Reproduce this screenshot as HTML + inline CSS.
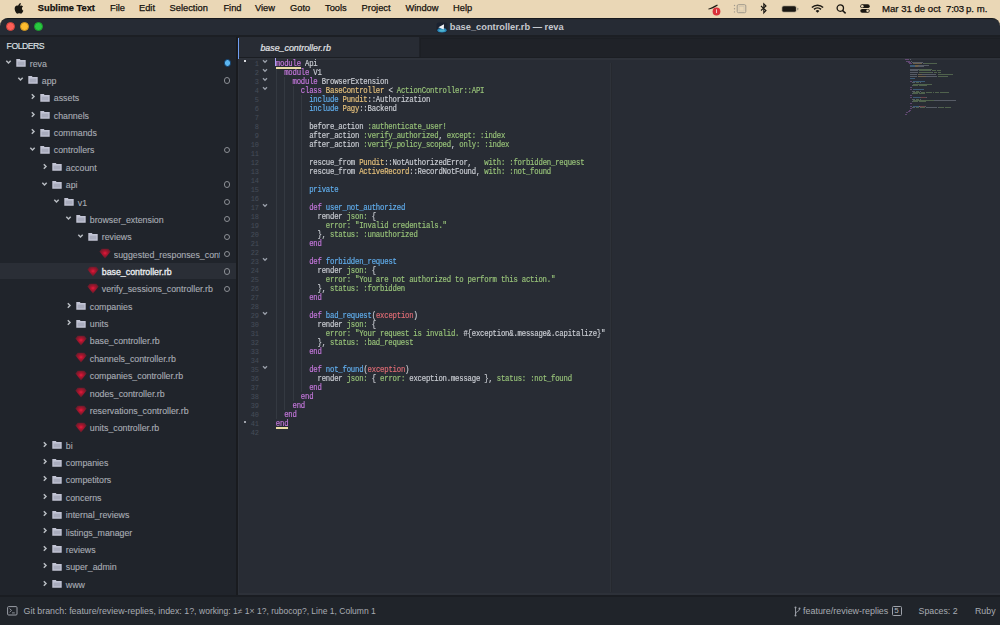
<!DOCTYPE html>
<html><head><meta charset="utf-8"><style>
*{margin:0;padding:0;box-sizing:border-box}
html,body{width:1000px;height:625px;overflow:hidden;background:#ead7b6}
body{position:relative;font-family:"Liberation Sans",sans-serif}
.abs{position:absolute}
.ic{position:absolute;overflow:visible}
.mb{position:absolute;top:2.6px;font-size:9.3px;line-height:11px;color:#15120e;white-space:nowrap;-webkit-text-stroke:0.25px #15120e}
.st{position:absolute;font-size:8.8px;line-height:12px;white-space:nowrap;color:#a8acb4;-webkit-text-stroke:0.12px currentColor}
.ln{position:absolute;left:238px;width:21px;text-align:right;font-family:"Liberation Mono",monospace;font-size:6.95px;line-height:10px;color:#464c59}
.cl{position:absolute;left:275.8px;font-family:"Liberation Mono",monospace;font-size:7.3px;letter-spacing:-0.21px;line-height:10px;white-space:pre;color:#cbced4;-webkit-text-stroke:0.15px currentColor;transform:scaleY(1.13);transform-origin:0 6.95px}
.kw{color:#c678dd} .typ{color:#e5c07b} .green{color:#98c379} .blue{color:#61afef} .txt{color:#cbced4} .red{color:#e06c75}
.ig{position:absolute;width:1px;height:9px;background:#343941}
.mm{position:absolute;height:1px;opacity:0.36}
.sb{position:absolute;top:605px;font-size:8.8px;line-height:12px;color:#a8acb3;white-space:nowrap}
</style></head><body>
<!-- menubar -->
<div class="abs" style="left:0;top:0;width:1000px;height:18px;background:#ead7b6"></div>
<svg class="ic" style="left:14px;top:2.5px" width="10" height="11" viewBox="0 0 170 200"><path fill="#1a1712" d="M150 170c-8 12-17 24-30 24s-17-8-32-8-20 8-32 8-22-12-30-24C10 145-3 100 14 70c8-15 24-25 40-25 13 0 25 9 33 9s21-10 36-9c6 0 24 2 35 19-1 1-21 12-20 37 0 29 26 39 26 39s-6 16-14 30zM118 0c2 15-4 29-12 39s-21 17-33 16c-2-15 5-30 13-39 8-9 22-16 32-16z"/></svg>
<div class="mb" style="left:37.8px;font-weight:bold">Sublime Text</div>
<div class="mb" style="left:110px">File</div>
<div class="mb" style="left:139px">Edit</div>
<div class="mb" style="left:169.6px">Selection</div>
<div class="mb" style="left:223.4px">Find</div>
<div class="mb" style="left:255px">View</div>
<div class="mb" style="left:290px">Goto</div>
<div class="mb" style="left:325px">Tools</div>
<div class="mb" style="left:361.6px">Project</div>
<div class="mb" style="left:405.4px">Window</div>
<div class="mb" style="left:453px">Help</div>
<!-- status icons -->
<svg class="ic" style="left:706px;top:2px" width="16" height="14" viewBox="0 0 16 14"><path d="M2.2 6.8 C5 5.8 7.5 4 11.2 2.4 L11.8 3.4 C8.5 5.5 5.5 7 2.6 7.4 Z" fill="#1d1a14"/><circle cx="10.5" cy="9.5" r="3.9" fill="#d9303a"/><rect x="10.1" y="7.3" width="0.9" height="3.8" fill="#f4d8d8"/></svg><svg class="ic" style="left:733px;top:3.5px" width="14" height="10" viewBox="0 0 14 10"><rect x="4.2" y="0.7" width="8.6" height="8" rx="1.2" fill="none" stroke="#9e988c" stroke-width="1"/><rect x="6" y="2.4" width="5" height="4.6" fill="none" stroke="#c9c0ae" stroke-width="0.6"/><circle cx="1.5" cy="1.5" r="0.7" fill="#9e988c"/><circle cx="1.5" cy="4.7" r="0.7" fill="#9e988c"/><circle cx="1.5" cy="7.9" r="0.7" fill="#9e988c"/></svg>
<svg class="ic" style="left:760px;top:2.5px" width="8" height="11" viewBox="0 0 8 11"><path d="M1 3 L6 7.5 L3.8 9.8 L3.8 0.8 L6 3 L1 7.5" stroke="#1a1712" stroke-width="1.1" fill="none"/></svg>
<svg class="ic" style="left:780.5px;top:4.5px" width="18" height="8" viewBox="0 0 18 8"><rect x="0.5" y="0.5" width="15.2" height="7" rx="2.2" fill="#b8ac94"/><rect x="1.3" y="1.3" width="13.6" height="5.4" rx="1.5" fill="#1a1712"/><rect x="16.2" y="2.7" width="1.1" height="2.6" rx="0.5" fill="#9a917f"/></svg>
<svg class="ic" style="left:811px;top:3.5px" width="13" height="9" viewBox="0 0 13 9"><path d="M0.9 3.5 A8 8 0 0 1 12.1 3.5" stroke="#1a1712" stroke-width="1.6" fill="none"/><path d="M3 5.4 A5 5 0 0 1 10 5.4" stroke="#1a1712" stroke-width="1.6" fill="none"/><path d="M4.6 7 L6.5 8.8 L8.4 7 A2.7 2.7 0 0 0 4.6 7Z" fill="#1a1712"/></svg>
<svg class="ic" style="left:836px;top:3.5px" width="11" height="10" viewBox="0 0 11 10"><circle cx="4.3" cy="4.1" r="3.2" stroke="#1a1712" stroke-width="1.3" fill="none"/><path d="M6.6 6.5 L9.6 9.4" stroke="#1a1712" stroke-width="1.5"/></svg>
<svg class="ic" style="left:859.5px;top:3.5px" width="10" height="9" viewBox="0 0 10 9"><rect x="0.3" y="0.3" width="9.4" height="3.8" rx="1.9" fill="#1a1712"/><circle cx="2.3" cy="2.2" r="1.3" fill="#ead7b6"/><rect x="0.3" y="4.9" width="9.4" height="3.8" rx="1.9" fill="#1a1712"/><circle cx="7.6" cy="6.8" r="1.3" fill="#ead7b6"/></svg>
<div class="mb" style="left:882px;font-size:9.6px">Mar 31 de oct</div>
<div class="mb" style="left:946px;font-size:9.6px;letter-spacing:-0.2px">7:03</div>
<div class="mb" style="left:966px;font-size:9.6px">p. m.</div>

<!-- window -->
<div class="abs" style="left:0;top:17.6px;width:1000px;height:608px;background:#262b34;border-radius:8px 8px 0 0;border-top:1.2px solid #17191d"></div>
<div class="abs" style="left:5.9px;top:22.3px;width:9px;height:9px;border-radius:50%;background:#fe5f57;border:0.5px solid #c8443d"></div>
<div class="abs" style="left:19.5px;top:22.3px;width:9px;height:9px;border-radius:50%;background:#febc2e;border:0.5px solid #c99322"></div>
<div class="abs" style="left:33.5px;top:22.3px;width:9px;height:9px;border-radius:50%;background:#28c840;border:0.5px solid #1d9a2e"></div>
<svg class="ic" style="left:435.5px;top:21.5px" width="12" height="11" viewBox="0 0 12 11"><rect x="0.5" y="0.5" width="11" height="10" rx="2.5" fill="#1b2230"/><ellipse cx="6" cy="8.3" rx="4.6" ry="2.2" fill="#2a86b8"/><ellipse cx="6" cy="8.6" rx="3" ry="1.2" fill="#5cc8d8" opacity="0.7"/><path d="M2.4 5.2 L8 2.2 L7.8 7.5 Z" fill="#f2f4f8"/></svg>
<div class="abs" style="left:449.8px;top:21.5px;font-size:9.28px;line-height:11px;font-weight:bold;color:#c5c8ce;white-space:nowrap">base_controller.rb — reva</div>

<!-- tab bar -->
<div class="abs" style="left:0;top:36.5px;width:1000px;height:21.5px;background:#1f2228"></div>
<div class="abs" style="left:0;top:35.3px;width:1000px;height:2px;background:#1c1f24"></div>
<div class="abs" style="left:238px;top:37px;width:181px;height:21px;background:#282c34"></div>
<div class="abs" style="left:420px;top:37.5px;width:580px;height:20.3px;background:#1f2228;border-left:1px solid #1c1f24;border-top:1px solid #1c1f24"></div>

<div class="abs" style="left:260.4px;top:42.5px;font-size:8.86px;line-height:11px;font-style:italic;color:#e2e4e8;white-space:nowrap;-webkit-text-stroke:0.2px #e2e4e8">base_controller.rb</div>

<!-- sidebar -->
<div class="abs" style="left:0;top:37px;width:236px;height:559px;background:#20242b"></div>
<div class="abs" style="left:236px;top:37px;width:2px;height:559px;background:#191b1f"></div>
<div class="abs" style="left:6.6px;top:42.3px;font-size:8.7px;line-height:9px;color:#dfe1e5;letter-spacing:-0.5px;-webkit-text-stroke:0.15px #dfe1e5">FOLDERS</div>
<svg class="ic" style="left:5.1px;top:59.0px" width="7" height="6" viewBox="0 0 7 6"><path d="M1.3 1.8 L3.5 4 L5.7 1.8" fill="none" stroke="#b8bcc2" stroke-width="1.5"/></svg>
<svg class="ic" style="left:15.7px;top:58.0px" width="10" height="9" viewBox="0 0 10 9"><path d="M0.3 1 L3.8 1 L4.6 2 L9.7 2 L9.7 8.7 L0.3 8.7 Z" fill="#c2c4d4"/><rect x="1.6" y="3.6" width="6.8" height="3.8" fill="#a9acbd"/></svg>
<div class="st" style="left:29.8px;top:57.5px;color:#a8acb4">reva</div>
<div style="position:absolute;left:223.6px;top:59.4px;width:7.2px;height:7.2px;border-radius:50%;background:#5cb6f0;border:1px solid #0d3a66"></div>
<svg class="ic" style="left:17.1px;top:76.4px" width="7" height="6" viewBox="0 0 7 6"><path d="M1.3 1.8 L3.5 4 L5.7 1.8" fill="none" stroke="#b8bcc2" stroke-width="1.5"/></svg>
<svg class="ic" style="left:27.7px;top:75.4px" width="10" height="9" viewBox="0 0 10 9"><path d="M0.3 1 L3.8 1 L4.6 2 L9.7 2 L9.7 8.7 L0.3 8.7 Z" fill="#c2c4d4"/><rect x="1.6" y="3.6" width="6.8" height="3.8" fill="#a9acbd"/></svg>
<div class="st" style="left:41.8px;top:74.9px;color:#a8acb4">app</div>
<div style="position:absolute;left:224.1px;top:77.2px;width:6.4px;height:6.4px;border-radius:50%;border:1.2px solid #8c8f95"></div>
<svg class="ic" style="left:29.5px;top:93.1px" width="6" height="7" viewBox="0 0 6 7"><path d="M1.8 1.3 L4 3.5 L1.8 5.7" fill="none" stroke="#b8bcc2" stroke-width="1.5"/></svg>
<svg class="ic" style="left:39.7px;top:92.7px" width="10" height="9" viewBox="0 0 10 9"><path d="M0.3 1 L3.8 1 L4.6 2 L9.7 2 L9.7 8.7 L0.3 8.7 Z" fill="#c2c4d4"/><rect x="1.6" y="3.6" width="6.8" height="3.8" fill="#a9acbd"/></svg>
<div class="st" style="left:53.8px;top:92.2px;color:#a8acb4">assets</div>
<svg class="ic" style="left:29.5px;top:110.5px" width="6" height="7" viewBox="0 0 6 7"><path d="M1.8 1.3 L4 3.5 L1.8 5.7" fill="none" stroke="#b8bcc2" stroke-width="1.5"/></svg>
<svg class="ic" style="left:39.7px;top:110.1px" width="10" height="9" viewBox="0 0 10 9"><path d="M0.3 1 L3.8 1 L4.6 2 L9.7 2 L9.7 8.7 L0.3 8.7 Z" fill="#c2c4d4"/><rect x="1.6" y="3.6" width="6.8" height="3.8" fill="#a9acbd"/></svg>
<div class="st" style="left:53.8px;top:109.6px;color:#a8acb4">channels</div>
<svg class="ic" style="left:29.5px;top:127.9px" width="6" height="7" viewBox="0 0 6 7"><path d="M1.8 1.3 L4 3.5 L1.8 5.7" fill="none" stroke="#b8bcc2" stroke-width="1.5"/></svg>
<svg class="ic" style="left:39.7px;top:127.5px" width="10" height="9" viewBox="0 0 10 9"><path d="M0.3 1 L3.8 1 L4.6 2 L9.7 2 L9.7 8.7 L0.3 8.7 Z" fill="#c2c4d4"/><rect x="1.6" y="3.6" width="6.8" height="3.8" fill="#a9acbd"/></svg>
<div class="st" style="left:53.8px;top:127.0px;color:#a8acb4">commands</div>
<svg class="ic" style="left:29.1px;top:145.9px" width="7" height="6" viewBox="0 0 7 6"><path d="M1.3 1.8 L3.5 4 L5.7 1.8" fill="none" stroke="#b8bcc2" stroke-width="1.5"/></svg>
<svg class="ic" style="left:39.7px;top:144.9px" width="10" height="9" viewBox="0 0 10 9"><path d="M0.3 1 L3.8 1 L4.6 2 L9.7 2 L9.7 8.7 L0.3 8.7 Z" fill="#c2c4d4"/><rect x="1.6" y="3.6" width="6.8" height="3.8" fill="#a9acbd"/></svg>
<div class="st" style="left:53.8px;top:144.4px;color:#a8acb4">controllers</div>
<div style="position:absolute;left:224.1px;top:146.7px;width:6.4px;height:6.4px;border-radius:50%;border:1.2px solid #8c8f95"></div>
<svg class="ic" style="left:41.5px;top:162.6px" width="6" height="7" viewBox="0 0 6 7"><path d="M1.8 1.3 L4 3.5 L1.8 5.7" fill="none" stroke="#b8bcc2" stroke-width="1.5"/></svg>
<svg class="ic" style="left:51.7px;top:162.2px" width="10" height="9" viewBox="0 0 10 9"><path d="M0.3 1 L3.8 1 L4.6 2 L9.7 2 L9.7 8.7 L0.3 8.7 Z" fill="#c2c4d4"/><rect x="1.6" y="3.6" width="6.8" height="3.8" fill="#a9acbd"/></svg>
<div class="st" style="left:65.8px;top:161.7px;color:#a8acb4">account</div>
<svg class="ic" style="left:41.1px;top:180.6px" width="7" height="6" viewBox="0 0 7 6"><path d="M1.3 1.8 L3.5 4 L5.7 1.8" fill="none" stroke="#b8bcc2" stroke-width="1.5"/></svg>
<svg class="ic" style="left:51.7px;top:179.6px" width="10" height="9" viewBox="0 0 10 9"><path d="M0.3 1 L3.8 1 L4.6 2 L9.7 2 L9.7 8.7 L0.3 8.7 Z" fill="#c2c4d4"/><rect x="1.6" y="3.6" width="6.8" height="3.8" fill="#a9acbd"/></svg>
<div class="st" style="left:65.8px;top:179.1px;color:#a8acb4">api</div>
<div style="position:absolute;left:224.1px;top:181.4px;width:6.4px;height:6.4px;border-radius:50%;border:1.2px solid #8c8f95"></div>
<svg class="ic" style="left:53.1px;top:198.0px" width="7" height="6" viewBox="0 0 7 6"><path d="M1.3 1.8 L3.5 4 L5.7 1.8" fill="none" stroke="#b8bcc2" stroke-width="1.5"/></svg>
<svg class="ic" style="left:63.7px;top:197.0px" width="10" height="9" viewBox="0 0 10 9"><path d="M0.3 1 L3.8 1 L4.6 2 L9.7 2 L9.7 8.7 L0.3 8.7 Z" fill="#c2c4d4"/><rect x="1.6" y="3.6" width="6.8" height="3.8" fill="#a9acbd"/></svg>
<div class="st" style="left:77.8px;top:196.5px;color:#a8acb4">v1</div>
<div style="position:absolute;left:224.1px;top:198.8px;width:6.4px;height:6.4px;border-radius:50%;border:1.2px solid #8c8f95"></div>
<svg class="ic" style="left:65.1px;top:215.3px" width="7" height="6" viewBox="0 0 7 6"><path d="M1.3 1.8 L3.5 4 L5.7 1.8" fill="none" stroke="#b8bcc2" stroke-width="1.5"/></svg>
<svg class="ic" style="left:75.7px;top:214.3px" width="10" height="9" viewBox="0 0 10 9"><path d="M0.3 1 L3.8 1 L4.6 2 L9.7 2 L9.7 8.7 L0.3 8.7 Z" fill="#c2c4d4"/><rect x="1.6" y="3.6" width="6.8" height="3.8" fill="#a9acbd"/></svg>
<div class="st" style="left:89.8px;top:213.8px;color:#a8acb4">browser_extension</div>
<div style="position:absolute;left:224.1px;top:216.1px;width:6.4px;height:6.4px;border-radius:50%;border:1.2px solid #8c8f95"></div>
<svg class="ic" style="left:77.1px;top:232.7px" width="7" height="6" viewBox="0 0 7 6"><path d="M1.3 1.8 L3.5 4 L5.7 1.8" fill="none" stroke="#b8bcc2" stroke-width="1.5"/></svg>
<svg class="ic" style="left:87.7px;top:231.7px" width="10" height="9" viewBox="0 0 10 9"><path d="M0.3 1 L3.8 1 L4.6 2 L9.7 2 L9.7 8.7 L0.3 8.7 Z" fill="#c2c4d4"/><rect x="1.6" y="3.6" width="6.8" height="3.8" fill="#a9acbd"/></svg>
<div class="st" style="left:101.8px;top:231.2px;color:#a8acb4">reviews</div>
<div style="position:absolute;left:224.1px;top:233.5px;width:6.4px;height:6.4px;border-radius:50%;border:1.2px solid #8c8f95"></div>
<svg class="ic" style="left:98.5px;top:248.2px" width="12" height="11" viewBox="0 0 12 11"><defs><radialGradient id="rg" cx="0.5" cy="0.45" r="0.55"><stop offset="0" stop-color="#e41c3e"/><stop offset="0.35" stop-color="#b0142e"/><stop offset="1" stop-color="#5a1d2a"/></radialGradient></defs><path d="M2.6 0.8 L9.4 0.8 L11.6 3.6 L6 10.4 L0.4 3.6 Z" fill="url(#rg)"/></svg>
<div class="st" style="left:113.8px;top:248.6px;color:#a8acb4;width:106px;overflow:hidden">suggested_responses_cont</div>
<div style="position:absolute;left:224.1px;top:250.9px;width:6.4px;height:6.4px;border-radius:50%;border:1.2px solid #8c8f95"></div>
<div style="position:absolute;left:0;top:263.1px;width:236px;height:16.4px;background:#2a2e36"></div>
<svg class="ic" style="left:86.5px;top:265.5px" width="12" height="11" viewBox="0 0 12 11"><defs><radialGradient id="rg" cx="0.5" cy="0.45" r="0.55"><stop offset="0" stop-color="#e41c3e"/><stop offset="0.35" stop-color="#b0142e"/><stop offset="1" stop-color="#5a1d2a"/></radialGradient></defs><path d="M2.6 0.8 L9.4 0.8 L11.6 3.6 L6 10.4 L0.4 3.6 Z" fill="url(#rg)"/></svg>
<div class="st" style="left:101.8px;top:265.9px;color:#eceef2;-webkit-text-stroke:0.3px #eceef2">base_controller.rb</div>
<div style="position:absolute;left:224.1px;top:268.2px;width:6.4px;height:6.4px;border-radius:50%;border:1.2px solid #8c8f95"></div>
<svg class="ic" style="left:86.5px;top:282.9px" width="12" height="11" viewBox="0 0 12 11"><defs><radialGradient id="rg" cx="0.5" cy="0.45" r="0.55"><stop offset="0" stop-color="#e41c3e"/><stop offset="0.35" stop-color="#b0142e"/><stop offset="1" stop-color="#5a1d2a"/></radialGradient></defs><path d="M2.6 0.8 L9.4 0.8 L11.6 3.6 L6 10.4 L0.4 3.6 Z" fill="url(#rg)"/></svg>
<div class="st" style="left:101.8px;top:283.3px;color:#a8acb4">verify_sessions_controller.rb</div>
<div style="position:absolute;left:224.1px;top:285.6px;width:6.4px;height:6.4px;border-radius:50%;border:1.2px solid #8c8f95"></div>
<svg class="ic" style="left:65.5px;top:301.6px" width="6" height="7" viewBox="0 0 6 7"><path d="M1.8 1.3 L4 3.5 L1.8 5.7" fill="none" stroke="#b8bcc2" stroke-width="1.5"/></svg>
<svg class="ic" style="left:75.7px;top:301.2px" width="10" height="9" viewBox="0 0 10 9"><path d="M0.3 1 L3.8 1 L4.6 2 L9.7 2 L9.7 8.7 L0.3 8.7 Z" fill="#c2c4d4"/><rect x="1.6" y="3.6" width="6.8" height="3.8" fill="#a9acbd"/></svg>
<div class="st" style="left:89.8px;top:300.7px;color:#a8acb4">companies</div>
<svg class="ic" style="left:65.5px;top:318.9px" width="6" height="7" viewBox="0 0 6 7"><path d="M1.8 1.3 L4 3.5 L1.8 5.7" fill="none" stroke="#b8bcc2" stroke-width="1.5"/></svg>
<svg class="ic" style="left:75.7px;top:318.6px" width="10" height="9" viewBox="0 0 10 9"><path d="M0.3 1 L3.8 1 L4.6 2 L9.7 2 L9.7 8.7 L0.3 8.7 Z" fill="#c2c4d4"/><rect x="1.6" y="3.6" width="6.8" height="3.8" fill="#a9acbd"/></svg>
<div class="st" style="left:89.8px;top:318.1px;color:#a8acb4">units</div>
<svg class="ic" style="left:74.5px;top:335.0px" width="12" height="11" viewBox="0 0 12 11"><defs><radialGradient id="rg" cx="0.5" cy="0.45" r="0.55"><stop offset="0" stop-color="#e41c3e"/><stop offset="0.35" stop-color="#b0142e"/><stop offset="1" stop-color="#5a1d2a"/></radialGradient></defs><path d="M2.6 0.8 L9.4 0.8 L11.6 3.6 L6 10.4 L0.4 3.6 Z" fill="url(#rg)"/></svg>
<div class="st" style="left:89.8px;top:335.4px;color:#a8acb4">base_controller.rb</div>
<svg class="ic" style="left:74.5px;top:352.4px" width="12" height="11" viewBox="0 0 12 11"><defs><radialGradient id="rg" cx="0.5" cy="0.45" r="0.55"><stop offset="0" stop-color="#e41c3e"/><stop offset="0.35" stop-color="#b0142e"/><stop offset="1" stop-color="#5a1d2a"/></radialGradient></defs><path d="M2.6 0.8 L9.4 0.8 L11.6 3.6 L6 10.4 L0.4 3.6 Z" fill="url(#rg)"/></svg>
<div class="st" style="left:89.8px;top:352.8px;color:#a8acb4">channels_controller.rb</div>
<svg class="ic" style="left:74.5px;top:369.8px" width="12" height="11" viewBox="0 0 12 11"><defs><radialGradient id="rg" cx="0.5" cy="0.45" r="0.55"><stop offset="0" stop-color="#e41c3e"/><stop offset="0.35" stop-color="#b0142e"/><stop offset="1" stop-color="#5a1d2a"/></radialGradient></defs><path d="M2.6 0.8 L9.4 0.8 L11.6 3.6 L6 10.4 L0.4 3.6 Z" fill="url(#rg)"/></svg>
<div class="st" style="left:89.8px;top:370.2px;color:#a8acb4">companies_controller.rb</div>
<svg class="ic" style="left:74.5px;top:387.1px" width="12" height="11" viewBox="0 0 12 11"><defs><radialGradient id="rg" cx="0.5" cy="0.45" r="0.55"><stop offset="0" stop-color="#e41c3e"/><stop offset="0.35" stop-color="#b0142e"/><stop offset="1" stop-color="#5a1d2a"/></radialGradient></defs><path d="M2.6 0.8 L9.4 0.8 L11.6 3.6 L6 10.4 L0.4 3.6 Z" fill="url(#rg)"/></svg>
<div class="st" style="left:89.8px;top:387.5px;color:#a8acb4">nodes_controller.rb</div>
<svg class="ic" style="left:74.5px;top:404.5px" width="12" height="11" viewBox="0 0 12 11"><defs><radialGradient id="rg" cx="0.5" cy="0.45" r="0.55"><stop offset="0" stop-color="#e41c3e"/><stop offset="0.35" stop-color="#b0142e"/><stop offset="1" stop-color="#5a1d2a"/></radialGradient></defs><path d="M2.6 0.8 L9.4 0.8 L11.6 3.6 L6 10.4 L0.4 3.6 Z" fill="url(#rg)"/></svg>
<div class="st" style="left:89.8px;top:404.9px;color:#a8acb4">reservations_controller.rb</div>
<svg class="ic" style="left:74.5px;top:421.9px" width="12" height="11" viewBox="0 0 12 11"><defs><radialGradient id="rg" cx="0.5" cy="0.45" r="0.55"><stop offset="0" stop-color="#e41c3e"/><stop offset="0.35" stop-color="#b0142e"/><stop offset="1" stop-color="#5a1d2a"/></radialGradient></defs><path d="M2.6 0.8 L9.4 0.8 L11.6 3.6 L6 10.4 L0.4 3.6 Z" fill="url(#rg)"/></svg>
<div class="st" style="left:89.8px;top:422.3px;color:#a8acb4">units_controller.rb</div>
<svg class="ic" style="left:41.5px;top:440.5px" width="6" height="7" viewBox="0 0 6 7"><path d="M1.8 1.3 L4 3.5 L1.8 5.7" fill="none" stroke="#b8bcc2" stroke-width="1.5"/></svg>
<svg class="ic" style="left:51.7px;top:440.1px" width="10" height="9" viewBox="0 0 10 9"><path d="M0.3 1 L3.8 1 L4.6 2 L9.7 2 L9.7 8.7 L0.3 8.7 Z" fill="#c2c4d4"/><rect x="1.6" y="3.6" width="6.8" height="3.8" fill="#a9acbd"/></svg>
<div class="st" style="left:65.8px;top:439.6px;color:#a8acb4">bi</div>
<svg class="ic" style="left:41.5px;top:457.9px" width="6" height="7" viewBox="0 0 6 7"><path d="M1.8 1.3 L4 3.5 L1.8 5.7" fill="none" stroke="#b8bcc2" stroke-width="1.5"/></svg>
<svg class="ic" style="left:51.7px;top:457.5px" width="10" height="9" viewBox="0 0 10 9"><path d="M0.3 1 L3.8 1 L4.6 2 L9.7 2 L9.7 8.7 L0.3 8.7 Z" fill="#c2c4d4"/><rect x="1.6" y="3.6" width="6.8" height="3.8" fill="#a9acbd"/></svg>
<div class="st" style="left:65.8px;top:457.0px;color:#a8acb4">companies</div>
<svg class="ic" style="left:41.5px;top:475.3px" width="6" height="7" viewBox="0 0 6 7"><path d="M1.8 1.3 L4 3.5 L1.8 5.7" fill="none" stroke="#b8bcc2" stroke-width="1.5"/></svg>
<svg class="ic" style="left:51.7px;top:474.9px" width="10" height="9" viewBox="0 0 10 9"><path d="M0.3 1 L3.8 1 L4.6 2 L9.7 2 L9.7 8.7 L0.3 8.7 Z" fill="#c2c4d4"/><rect x="1.6" y="3.6" width="6.8" height="3.8" fill="#a9acbd"/></svg>
<div class="st" style="left:65.8px;top:474.4px;color:#a8acb4">competitors</div>
<svg class="ic" style="left:41.5px;top:492.6px" width="6" height="7" viewBox="0 0 6 7"><path d="M1.8 1.3 L4 3.5 L1.8 5.7" fill="none" stroke="#b8bcc2" stroke-width="1.5"/></svg>
<svg class="ic" style="left:51.7px;top:492.2px" width="10" height="9" viewBox="0 0 10 9"><path d="M0.3 1 L3.8 1 L4.6 2 L9.7 2 L9.7 8.7 L0.3 8.7 Z" fill="#c2c4d4"/><rect x="1.6" y="3.6" width="6.8" height="3.8" fill="#a9acbd"/></svg>
<div class="st" style="left:65.8px;top:491.8px;color:#a8acb4">concerns</div>
<svg class="ic" style="left:41.5px;top:510.0px" width="6" height="7" viewBox="0 0 6 7"><path d="M1.8 1.3 L4 3.5 L1.8 5.7" fill="none" stroke="#b8bcc2" stroke-width="1.5"/></svg>
<svg class="ic" style="left:51.7px;top:509.6px" width="10" height="9" viewBox="0 0 10 9"><path d="M0.3 1 L3.8 1 L4.6 2 L9.7 2 L9.7 8.7 L0.3 8.7 Z" fill="#c2c4d4"/><rect x="1.6" y="3.6" width="6.8" height="3.8" fill="#a9acbd"/></svg>
<div class="st" style="left:65.8px;top:509.1px;color:#a8acb4">internal_reviews</div>
<svg class="ic" style="left:41.5px;top:527.4px" width="6" height="7" viewBox="0 0 6 7"><path d="M1.8 1.3 L4 3.5 L1.8 5.7" fill="none" stroke="#b8bcc2" stroke-width="1.5"/></svg>
<svg class="ic" style="left:51.7px;top:527.0px" width="10" height="9" viewBox="0 0 10 9"><path d="M0.3 1 L3.8 1 L4.6 2 L9.7 2 L9.7 8.7 L0.3 8.7 Z" fill="#c2c4d4"/><rect x="1.6" y="3.6" width="6.8" height="3.8" fill="#a9acbd"/></svg>
<div class="st" style="left:65.8px;top:526.5px;color:#a8acb4">listings_manager</div>
<svg class="ic" style="left:41.5px;top:544.8px" width="6" height="7" viewBox="0 0 6 7"><path d="M1.8 1.3 L4 3.5 L1.8 5.7" fill="none" stroke="#b8bcc2" stroke-width="1.5"/></svg>
<svg class="ic" style="left:51.7px;top:544.4px" width="10" height="9" viewBox="0 0 10 9"><path d="M0.3 1 L3.8 1 L4.6 2 L9.7 2 L9.7 8.7 L0.3 8.7 Z" fill="#c2c4d4"/><rect x="1.6" y="3.6" width="6.8" height="3.8" fill="#a9acbd"/></svg>
<div class="st" style="left:65.8px;top:543.9px;color:#a8acb4">reviews</div>
<svg class="ic" style="left:41.5px;top:562.1px" width="6" height="7" viewBox="0 0 6 7"><path d="M1.8 1.3 L4 3.5 L1.8 5.7" fill="none" stroke="#b8bcc2" stroke-width="1.5"/></svg>
<svg class="ic" style="left:51.7px;top:561.7px" width="10" height="9" viewBox="0 0 10 9"><path d="M0.3 1 L3.8 1 L4.6 2 L9.7 2 L9.7 8.7 L0.3 8.7 Z" fill="#c2c4d4"/><rect x="1.6" y="3.6" width="6.8" height="3.8" fill="#a9acbd"/></svg>
<div class="st" style="left:65.8px;top:561.2px;color:#a8acb4">super_admin</div>
<svg class="ic" style="left:41.5px;top:579.5px" width="6" height="7" viewBox="0 0 6 7"><path d="M1.8 1.3 L4 3.5 L1.8 5.7" fill="none" stroke="#b8bcc2" stroke-width="1.5"/></svg>
<svg class="ic" style="left:51.7px;top:579.1px" width="10" height="9" viewBox="0 0 10 9"><path d="M0.3 1 L3.8 1 L4.6 2 L9.7 2 L9.7 8.7 L0.3 8.7 Z" fill="#c2c4d4"/><rect x="1.6" y="3.6" width="6.8" height="3.8" fill="#a9acbd"/></svg>
<div class="st" style="left:65.8px;top:578.6px;color:#a8acb4">www</div>

<!-- editor -->
<div class="abs" style="left:238px;top:58px;width:762px;height:538px;background:#282c34"></div>
<div class="abs" style="left:238px;top:57.3px;width:762px;height:1px;background:#1b1e23"></div>
<div class="abs" style="left:238px;top:58.3px;width:762px;height:1.5px;background:#2e323a"></div>
<div class="abs" style="left:609.5px;top:63px;width:1.3px;height:529px;background:#2e3239"></div>
<div class="abs" style="left:610.8px;top:63px;width:1.5px;height:529px;background:#26292f"></div>
<div class="abs" style="left:238px;top:58px;width:1px;height:537px;background:#2d3139"></div>
<div class="abs" style="left:237.5px;top:37.5px;width:1.6px;height:21.3px;background:#6f9ef2"></div>
<div class="ig" style="left:276.4px;top:68.0px"></div><div class="ig" style="left:284.4px;top:77.0px"></div><div class="ig" style="left:276.4px;top:77.0px"></div><div class="ig" style="left:284.4px;top:86.0px"></div><div class="ig" style="left:292.8px;top:86.0px"></div><div class="ig" style="left:276.4px;top:86.0px"></div><div class="ig" style="left:284.4px;top:95.0px"></div><div class="ig" style="left:292.8px;top:95.0px"></div><div class="ig" style="left:301.1px;top:95.0px"></div><div class="ig" style="left:276.4px;top:95.0px"></div><div class="ig" style="left:284.4px;top:104.0px"></div><div class="ig" style="left:292.8px;top:104.0px"></div><div class="ig" style="left:301.1px;top:104.0px"></div><div class="ig" style="left:276.4px;top:104.0px"></div><div class="ig" style="left:284.4px;top:113.0px"></div><div class="ig" style="left:292.8px;top:113.0px"></div><div class="ig" style="left:301.1px;top:113.0px"></div><div class="ig" style="left:276.4px;top:113.0px"></div><div class="ig" style="left:284.4px;top:122.0px"></div><div class="ig" style="left:292.8px;top:122.0px"></div><div class="ig" style="left:301.1px;top:122.0px"></div><div class="ig" style="left:276.4px;top:122.0px"></div><div class="ig" style="left:284.4px;top:131.0px"></div><div class="ig" style="left:292.8px;top:131.0px"></div><div class="ig" style="left:301.1px;top:131.0px"></div><div class="ig" style="left:276.4px;top:131.0px"></div><div class="ig" style="left:284.4px;top:140.0px"></div><div class="ig" style="left:292.8px;top:140.0px"></div><div class="ig" style="left:301.1px;top:140.0px"></div><div class="ig" style="left:276.4px;top:140.0px"></div><div class="ig" style="left:284.4px;top:149.0px"></div><div class="ig" style="left:292.8px;top:149.0px"></div><div class="ig" style="left:301.1px;top:149.0px"></div><div class="ig" style="left:276.4px;top:149.0px"></div><div class="ig" style="left:284.4px;top:158.0px"></div><div class="ig" style="left:292.8px;top:158.0px"></div><div class="ig" style="left:301.1px;top:158.0px"></div><div class="ig" style="left:276.4px;top:158.0px"></div><div class="ig" style="left:284.4px;top:167.0px"></div><div class="ig" style="left:292.8px;top:167.0px"></div><div class="ig" style="left:301.1px;top:167.0px"></div><div class="ig" style="left:276.4px;top:167.0px"></div><div class="ig" style="left:284.4px;top:176.0px"></div><div class="ig" style="left:292.8px;top:176.0px"></div><div class="ig" style="left:301.1px;top:176.0px"></div><div class="ig" style="left:276.4px;top:176.0px"></div><div class="ig" style="left:284.4px;top:185.0px"></div><div class="ig" style="left:292.8px;top:185.0px"></div><div class="ig" style="left:301.1px;top:185.0px"></div><div class="ig" style="left:276.4px;top:185.0px"></div><div class="ig" style="left:284.4px;top:194.0px"></div><div class="ig" style="left:292.8px;top:194.0px"></div><div class="ig" style="left:301.1px;top:194.0px"></div><div class="ig" style="left:276.4px;top:194.0px"></div><div class="ig" style="left:284.4px;top:203.0px"></div><div class="ig" style="left:292.8px;top:203.0px"></div><div class="ig" style="left:301.1px;top:203.0px"></div><div class="ig" style="left:276.4px;top:203.0px"></div><div class="ig" style="left:284.4px;top:212.0px"></div><div class="ig" style="left:292.8px;top:212.0px"></div><div class="ig" style="left:301.1px;top:212.0px"></div><div class="ig" style="left:276.4px;top:212.0px"></div><div class="ig" style="left:284.4px;top:221.0px"></div><div class="ig" style="left:292.8px;top:221.0px"></div><div class="ig" style="left:301.1px;top:221.0px"></div><div class="ig" style="left:276.4px;top:221.0px"></div><div class="ig" style="left:284.4px;top:230.0px"></div><div class="ig" style="left:292.8px;top:230.0px"></div><div class="ig" style="left:301.1px;top:230.0px"></div><div class="ig" style="left:276.4px;top:230.0px"></div><div class="ig" style="left:284.4px;top:239.0px"></div><div class="ig" style="left:292.8px;top:239.0px"></div><div class="ig" style="left:301.1px;top:239.0px"></div><div class="ig" style="left:276.4px;top:239.0px"></div><div class="ig" style="left:284.4px;top:248.0px"></div><div class="ig" style="left:292.8px;top:248.0px"></div><div class="ig" style="left:301.1px;top:248.0px"></div><div class="ig" style="left:276.4px;top:248.0px"></div><div class="ig" style="left:284.4px;top:257.0px"></div><div class="ig" style="left:292.8px;top:257.0px"></div><div class="ig" style="left:301.1px;top:257.0px"></div><div class="ig" style="left:276.4px;top:257.0px"></div><div class="ig" style="left:284.4px;top:266.0px"></div><div class="ig" style="left:292.8px;top:266.0px"></div><div class="ig" style="left:301.1px;top:266.0px"></div><div class="ig" style="left:276.4px;top:266.0px"></div><div class="ig" style="left:284.4px;top:275.0px"></div><div class="ig" style="left:292.8px;top:275.0px"></div><div class="ig" style="left:301.1px;top:275.0px"></div><div class="ig" style="left:276.4px;top:275.0px"></div><div class="ig" style="left:284.4px;top:284.0px"></div><div class="ig" style="left:292.8px;top:284.0px"></div><div class="ig" style="left:301.1px;top:284.0px"></div><div class="ig" style="left:276.4px;top:284.0px"></div><div class="ig" style="left:284.4px;top:293.0px"></div><div class="ig" style="left:292.8px;top:293.0px"></div><div class="ig" style="left:301.1px;top:293.0px"></div><div class="ig" style="left:276.4px;top:293.0px"></div><div class="ig" style="left:284.4px;top:302.0px"></div><div class="ig" style="left:292.8px;top:302.0px"></div><div class="ig" style="left:301.1px;top:302.0px"></div><div class="ig" style="left:276.4px;top:302.0px"></div><div class="ig" style="left:284.4px;top:311.0px"></div><div class="ig" style="left:292.8px;top:311.0px"></div><div class="ig" style="left:301.1px;top:311.0px"></div><div class="ig" style="left:276.4px;top:311.0px"></div><div class="ig" style="left:284.4px;top:320.0px"></div><div class="ig" style="left:292.8px;top:320.0px"></div><div class="ig" style="left:301.1px;top:320.0px"></div><div class="ig" style="left:276.4px;top:320.0px"></div><div class="ig" style="left:284.4px;top:329.0px"></div><div class="ig" style="left:292.8px;top:329.0px"></div><div class="ig" style="left:301.1px;top:329.0px"></div><div class="ig" style="left:276.4px;top:329.0px"></div><div class="ig" style="left:284.4px;top:338.0px"></div><div class="ig" style="left:292.8px;top:338.0px"></div><div class="ig" style="left:301.1px;top:338.0px"></div><div class="ig" style="left:276.4px;top:338.0px"></div><div class="ig" style="left:284.4px;top:347.0px"></div><div class="ig" style="left:292.8px;top:347.0px"></div><div class="ig" style="left:301.1px;top:347.0px"></div><div class="ig" style="left:276.4px;top:347.0px"></div><div class="ig" style="left:284.4px;top:356.0px"></div><div class="ig" style="left:292.8px;top:356.0px"></div><div class="ig" style="left:301.1px;top:356.0px"></div><div class="ig" style="left:276.4px;top:356.0px"></div><div class="ig" style="left:284.4px;top:365.0px"></div><div class="ig" style="left:292.8px;top:365.0px"></div><div class="ig" style="left:301.1px;top:365.0px"></div><div class="ig" style="left:276.4px;top:365.0px"></div><div class="ig" style="left:284.4px;top:374.0px"></div><div class="ig" style="left:292.8px;top:374.0px"></div><div class="ig" style="left:301.1px;top:374.0px"></div><div class="ig" style="left:276.4px;top:374.0px"></div><div class="ig" style="left:284.4px;top:383.0px"></div><div class="ig" style="left:292.8px;top:383.0px"></div><div class="ig" style="left:301.1px;top:383.0px"></div><div class="ig" style="left:276.4px;top:383.0px"></div><div class="ig" style="left:284.4px;top:392.0px"></div><div class="ig" style="left:292.8px;top:392.0px"></div><div class="ig" style="left:276.4px;top:392.0px"></div><div class="ig" style="left:284.4px;top:401.0px"></div><div class="ig" style="left:276.4px;top:401.0px"></div><div class="ig" style="left:276.4px;top:410.0px"></div>
<div class="abs" style="left:243.8px;top:60px;width:2.2px;height:2.2px;background:#d6d8dc"></div>
<div class="abs" style="left:243.8px;top:420.5px;width:2.2px;height:2.2px;background:#9ea2aa"></div>
<div class="ln" style="top:58.5px">1</div><svg class="ic" style="left:261.8px;top:59.2px" width="6" height="5" viewBox="0 0 6 5"><path d="M1 1.3 L3 3.3 L5 1.3" fill="none" stroke="#9aa0aa" stroke-width="1.3"/></svg><div class="cl" style="top:59.45px"><span class="kw">module</span><span class="txt"> Api</span></div><div class="ln" style="top:67.5px">2</div><svg class="ic" style="left:261.8px;top:68.2px" width="6" height="5" viewBox="0 0 6 5"><path d="M1 1.3 L3 3.3 L5 1.3" fill="none" stroke="#9aa0aa" stroke-width="1.3"/></svg><div class="cl" style="top:68.45px"><span class="txt">  </span><span class="kw">module</span><span class="txt"> V1</span></div><div class="ln" style="top:76.5px">3</div><svg class="ic" style="left:261.8px;top:77.2px" width="6" height="5" viewBox="0 0 6 5"><path d="M1 1.3 L3 3.3 L5 1.3" fill="none" stroke="#9aa0aa" stroke-width="1.3"/></svg><div class="cl" style="top:77.45px"><span class="txt">    </span><span class="kw">module</span><span class="txt"> BrowserExtension</span></div><div class="ln" style="top:85.5px">4</div><svg class="ic" style="left:261.8px;top:86.2px" width="6" height="5" viewBox="0 0 6 5"><path d="M1 1.3 L3 3.3 L5 1.3" fill="none" stroke="#9aa0aa" stroke-width="1.3"/></svg><div class="cl" style="top:86.45px"><span class="txt">      </span><span class="kw">class</span><span class="txt"> </span><span class="typ">BaseController</span><span class="txt"> &lt; </span><span class="green">ActionController::API</span></div><div class="ln" style="top:94.5px">5</div><div class="cl" style="top:95.45px"><span class="txt">        </span><span class="blue">include</span><span class="txt"> </span><span class="typ">Pundit</span><span class="txt">::Authorization</span></div><div class="ln" style="top:103.5px">6</div><div class="cl" style="top:104.45px"><span class="txt">        </span><span class="blue">include</span><span class="txt"> </span><span class="typ">Pagy</span><span class="txt">::Backend</span></div><div class="ln" style="top:112.5px">7</div><div class="cl" style="top:113.45px"></div><div class="ln" style="top:121.5px">8</div><div class="cl" style="top:122.45px"><span class="txt">        before_action </span><span class="green">:authenticate_user!</span></div><div class="ln" style="top:130.5px">9</div><div class="cl" style="top:131.45px"><span class="txt">        after_action </span><span class="green">:verify_authorized</span><span class="txt">, </span><span class="green">except: :index</span></div><div class="ln" style="top:139.5px">10</div><div class="cl" style="top:140.45px"><span class="txt">        after_action </span><span class="green">:verify_policy_scoped</span><span class="txt">, </span><span class="green">only: :index</span></div><div class="ln" style="top:148.5px">11</div><div class="cl" style="top:149.45px"></div><div class="ln" style="top:157.5px">12</div><div class="cl" style="top:158.45px"><span class="txt">        rescue_from </span><span class="typ">Pundit</span><span class="txt">::NotAuthorizedError,   </span><span class="green">with: :forbidden_request</span></div><div class="ln" style="top:166.5px">13</div><div class="cl" style="top:167.45px"><span class="txt">        rescue_from </span><span class="typ">ActiveRecord</span><span class="txt">::RecordNotFound, </span><span class="green">with: :not_found</span></div><div class="ln" style="top:175.5px">14</div><div class="cl" style="top:176.45px"></div><div class="ln" style="top:184.5px">15</div><div class="cl" style="top:185.45px"><span class="txt">        </span><span class="blue">private</span></div><div class="ln" style="top:193.5px">16</div><div class="cl" style="top:194.45px"></div><div class="ln" style="top:202.5px">17</div><svg class="ic" style="left:261.8px;top:203.2px" width="6" height="5" viewBox="0 0 6 5"><path d="M1 1.3 L3 3.3 L5 1.3" fill="none" stroke="#9aa0aa" stroke-width="1.3"/></svg><div class="cl" style="top:203.45px"><span class="txt">        </span><span class="kw">def</span><span class="txt"> </span><span class="blue">user_not_authorized</span></div><div class="ln" style="top:211.5px">18</div><div class="cl" style="top:212.45px"><span class="txt">          render </span><span class="green">json:</span><span class="txt"> {</span></div><div class="ln" style="top:220.5px">19</div><div class="cl" style="top:221.45px"><span class="txt">            </span><span class="green">error: &quot;Invalid credentials.&quot;</span></div><div class="ln" style="top:229.5px">20</div><div class="cl" style="top:230.45px"><span class="txt">          }, </span><span class="green">status: :unauthorized</span></div><div class="ln" style="top:238.5px">21</div><div class="cl" style="top:239.45px"><span class="txt">        </span><span class="kw">end</span></div><div class="ln" style="top:247.5px">22</div><div class="cl" style="top:248.45px"></div><div class="ln" style="top:256.5px">23</div><svg class="ic" style="left:261.8px;top:257.2px" width="6" height="5" viewBox="0 0 6 5"><path d="M1 1.3 L3 3.3 L5 1.3" fill="none" stroke="#9aa0aa" stroke-width="1.3"/></svg><div class="cl" style="top:257.45px"><span class="txt">        </span><span class="kw">def</span><span class="txt"> </span><span class="blue">forbidden_request</span></div><div class="ln" style="top:265.5px">24</div><div class="cl" style="top:266.45px"><span class="txt">          render </span><span class="green">json:</span><span class="txt"> {</span></div><div class="ln" style="top:274.5px">25</div><div class="cl" style="top:275.45px"><span class="txt">            </span><span class="green">error: &quot;You are not authorized to perform this action.&quot;</span></div><div class="ln" style="top:283.5px">26</div><div class="cl" style="top:284.45px"><span class="txt">          }, </span><span class="green">status: :forbidden</span></div><div class="ln" style="top:292.5px">27</div><div class="cl" style="top:293.45px"><span class="txt">        </span><span class="kw">end</span></div><div class="ln" style="top:301.5px">28</div><div class="cl" style="top:302.45px"></div><div class="ln" style="top:310.5px">29</div><svg class="ic" style="left:261.8px;top:311.2px" width="6" height="5" viewBox="0 0 6 5"><path d="M1 1.3 L3 3.3 L5 1.3" fill="none" stroke="#9aa0aa" stroke-width="1.3"/></svg><div class="cl" style="top:311.45px"><span class="txt">        </span><span class="kw">def</span><span class="txt"> </span><span class="blue">bad_request</span><span class="txt">(</span><span class="red">exception</span><span class="txt">)</span></div><div class="ln" style="top:319.5px">30</div><div class="cl" style="top:320.45px"><span class="txt">          render </span><span class="green">json:</span><span class="txt"> {</span></div><div class="ln" style="top:328.5px">31</div><div class="cl" style="top:329.45px"><span class="txt">            </span><span class="green">error: &quot;Your request is invalid. </span><span class="txt">#{exception&amp;.message&amp;.capitalize}&quot;</span></div><div class="ln" style="top:337.5px">32</div><div class="cl" style="top:338.45px"><span class="txt">          }, </span><span class="green">status: :bad_request</span></div><div class="ln" style="top:346.5px">33</div><div class="cl" style="top:347.45px"><span class="txt">        </span><span class="kw">end</span></div><div class="ln" style="top:355.5px">34</div><div class="cl" style="top:356.45px"></div><div class="ln" style="top:364.5px">35</div><svg class="ic" style="left:261.8px;top:365.2px" width="6" height="5" viewBox="0 0 6 5"><path d="M1 1.3 L3 3.3 L5 1.3" fill="none" stroke="#9aa0aa" stroke-width="1.3"/></svg><div class="cl" style="top:365.45px"><span class="txt">        </span><span class="kw">def</span><span class="txt"> </span><span class="blue">not_found</span><span class="txt">(</span><span class="red">exception</span><span class="txt">)</span></div><div class="ln" style="top:373.5px">36</div><div class="cl" style="top:374.45px"><span class="txt">          render </span><span class="green">json:</span><span class="txt"> { </span><span class="green">error:</span><span class="txt"> exception.message }, </span><span class="green">status: :not_found</span></div><div class="ln" style="top:382.5px">37</div><div class="cl" style="top:383.45px"><span class="txt">        </span><span class="kw">end</span></div><div class="ln" style="top:391.5px">38</div><div class="cl" style="top:392.45px"><span class="txt">      </span><span class="kw">end</span></div><div class="ln" style="top:400.5px">39</div><div class="cl" style="top:401.45px"><span class="txt">    </span><span class="kw">end</span></div><div class="ln" style="top:409.5px">40</div><div class="cl" style="top:410.45px"><span class="txt">  </span><span class="kw">end</span></div><div class="ln" style="top:418.5px">41</div><div class="cl" style="top:419.45px"><span class="kw">end</span></div><div class="ln" style="top:427.5px">42</div><div class="cl" style="top:428.45px"></div>
<div class="abs" style="left:275.5px;top:67px;width:25.3px;height:1.8px;background:#e9dca6"></div>
<div class="abs" style="left:275.5px;top:427px;width:12.6px;height:1.8px;background:#e9dca6"></div>
<div class="abs" style="left:274.9px;top:58.4px;width:1.4px;height:7.4px;background:#a99ff2"></div>
<div style="position:absolute;left:0;top:0;width:1000px;height:625px;filter:blur(0.7px)"><div class="mm" style="left:905.00px;top:59.30px;width:3.90px;background:#c678dd"></div><div class="mm" style="left:909.55px;top:59.30px;width:1.95px;background:#abb2bf"></div><div class="mm" style="left:906.30px;top:60.66px;width:3.90px;background:#c678dd"></div><div class="mm" style="left:910.85px;top:60.66px;width:1.30px;background:#abb2bf"></div><div class="mm" style="left:907.60px;top:62.02px;width:3.90px;background:#c678dd"></div><div class="mm" style="left:912.15px;top:62.02px;width:10.40px;background:#abb2bf"></div><div class="mm" style="left:908.90px;top:63.38px;width:3.25px;background:#c678dd"></div><div class="mm" style="left:912.80px;top:63.38px;width:9.10px;background:#e5c07b"></div><div class="mm" style="left:922.55px;top:63.38px;width:0.65px;background:#abb2bf"></div><div class="mm" style="left:923.85px;top:63.38px;width:13.65px;background:#98c379"></div><div class="mm" style="left:910.20px;top:64.74px;width:4.55px;background:#61afef"></div><div class="mm" style="left:915.40px;top:64.74px;width:3.90px;background:#e5c07b"></div><div class="mm" style="left:919.30px;top:64.74px;width:9.75px;background:#abb2bf"></div><div class="mm" style="left:910.20px;top:66.10px;width:4.55px;background:#61afef"></div><div class="mm" style="left:915.40px;top:66.10px;width:2.60px;background:#e5c07b"></div><div class="mm" style="left:918.00px;top:66.10px;width:5.85px;background:#abb2bf"></div><div class="mm" style="left:910.20px;top:68.82px;width:8.45px;background:#abb2bf"></div><div class="mm" style="left:919.30px;top:68.82px;width:12.35px;background:#98c379"></div><div class="mm" style="left:910.20px;top:70.18px;width:7.80px;background:#abb2bf"></div><div class="mm" style="left:918.65px;top:70.18px;width:11.70px;background:#98c379"></div><div class="mm" style="left:930.35px;top:70.18px;width:0.65px;background:#abb2bf"></div><div class="mm" style="left:931.65px;top:70.18px;width:4.55px;background:#98c379"></div><div class="mm" style="left:936.85px;top:70.18px;width:3.90px;background:#98c379"></div><div class="mm" style="left:910.20px;top:71.54px;width:7.80px;background:#abb2bf"></div><div class="mm" style="left:918.65px;top:71.54px;width:13.65px;background:#98c379"></div><div class="mm" style="left:932.30px;top:71.54px;width:0.65px;background:#abb2bf"></div><div class="mm" style="left:933.60px;top:71.54px;width:3.25px;background:#98c379"></div><div class="mm" style="left:937.50px;top:71.54px;width:3.90px;background:#98c379"></div><div class="mm" style="left:910.20px;top:74.26px;width:7.15px;background:#abb2bf"></div><div class="mm" style="left:918.00px;top:74.26px;width:3.90px;background:#e5c07b"></div><div class="mm" style="left:921.90px;top:74.26px;width:13.65px;background:#abb2bf"></div><div class="mm" style="left:937.50px;top:74.26px;width:3.25px;background:#98c379"></div><div class="mm" style="left:941.40px;top:74.26px;width:11.70px;background:#98c379"></div><div class="mm" style="left:910.20px;top:75.62px;width:7.15px;background:#abb2bf"></div><div class="mm" style="left:918.00px;top:75.62px;width:7.80px;background:#e5c07b"></div><div class="mm" style="left:925.80px;top:75.62px;width:11.05px;background:#abb2bf"></div><div class="mm" style="left:937.50px;top:75.62px;width:3.25px;background:#98c379"></div><div class="mm" style="left:941.40px;top:75.62px;width:6.50px;background:#98c379"></div><div class="mm" style="left:910.20px;top:78.34px;width:4.55px;background:#61afef"></div><div class="mm" style="left:910.20px;top:81.06px;width:1.95px;background:#c678dd"></div><div class="mm" style="left:912.80px;top:81.06px;width:12.35px;background:#61afef"></div><div class="mm" style="left:911.50px;top:82.42px;width:3.90px;background:#abb2bf"></div><div class="mm" style="left:916.05px;top:82.42px;width:3.25px;background:#98c379"></div><div class="mm" style="left:919.95px;top:82.42px;width:0.65px;background:#abb2bf"></div><div class="mm" style="left:912.80px;top:83.78px;width:3.90px;background:#98c379"></div><div class="mm" style="left:917.35px;top:83.78px;width:5.20px;background:#98c379"></div><div class="mm" style="left:923.20px;top:83.78px;width:8.45px;background:#98c379"></div><div class="mm" style="left:911.50px;top:85.14px;width:1.30px;background:#abb2bf"></div><div class="mm" style="left:913.45px;top:85.14px;width:4.55px;background:#98c379"></div><div class="mm" style="left:918.65px;top:85.14px;width:8.45px;background:#98c379"></div><div class="mm" style="left:910.20px;top:86.50px;width:1.95px;background:#c678dd"></div><div class="mm" style="left:910.20px;top:89.22px;width:1.95px;background:#c678dd"></div><div class="mm" style="left:912.80px;top:89.22px;width:11.05px;background:#61afef"></div><div class="mm" style="left:911.50px;top:90.58px;width:3.90px;background:#abb2bf"></div><div class="mm" style="left:916.05px;top:90.58px;width:3.25px;background:#98c379"></div><div class="mm" style="left:919.95px;top:90.58px;width:0.65px;background:#abb2bf"></div><div class="mm" style="left:912.80px;top:91.94px;width:3.90px;background:#98c379"></div><div class="mm" style="left:917.35px;top:91.94px;width:2.60px;background:#98c379"></div><div class="mm" style="left:920.60px;top:91.94px;width:1.95px;background:#98c379"></div><div class="mm" style="left:923.20px;top:91.94px;width:1.95px;background:#98c379"></div><div class="mm" style="left:925.80px;top:91.94px;width:6.50px;background:#98c379"></div><div class="mm" style="left:932.95px;top:91.94px;width:1.30px;background:#98c379"></div><div class="mm" style="left:934.90px;top:91.94px;width:4.55px;background:#98c379"></div><div class="mm" style="left:940.10px;top:91.94px;width:2.60px;background:#98c379"></div><div class="mm" style="left:943.35px;top:91.94px;width:5.20px;background:#98c379"></div><div class="mm" style="left:911.50px;top:93.30px;width:1.30px;background:#abb2bf"></div><div class="mm" style="left:913.45px;top:93.30px;width:4.55px;background:#98c379"></div><div class="mm" style="left:918.65px;top:93.30px;width:6.50px;background:#98c379"></div><div class="mm" style="left:910.20px;top:94.66px;width:1.95px;background:#c678dd"></div><div class="mm" style="left:910.20px;top:97.38px;width:1.95px;background:#c678dd"></div><div class="mm" style="left:912.80px;top:97.38px;width:7.15px;background:#61afef"></div><div class="mm" style="left:919.95px;top:97.38px;width:0.65px;background:#abb2bf"></div><div class="mm" style="left:920.60px;top:97.38px;width:5.85px;background:#e06c75"></div><div class="mm" style="left:926.45px;top:97.38px;width:0.65px;background:#abb2bf"></div><div class="mm" style="left:911.50px;top:98.74px;width:3.90px;background:#abb2bf"></div><div class="mm" style="left:916.05px;top:98.74px;width:3.25px;background:#98c379"></div><div class="mm" style="left:919.95px;top:98.74px;width:0.65px;background:#abb2bf"></div><div class="mm" style="left:912.80px;top:100.10px;width:3.90px;background:#98c379"></div><div class="mm" style="left:917.35px;top:100.10px;width:3.25px;background:#98c379"></div><div class="mm" style="left:921.25px;top:100.10px;width:4.55px;background:#98c379"></div><div class="mm" style="left:926.45px;top:100.10px;width:1.30px;background:#98c379"></div><div class="mm" style="left:928.40px;top:100.10px;width:5.20px;background:#98c379"></div><div class="mm" style="left:934.25px;top:100.10px;width:22.10px;background:#abb2bf"></div><div class="mm" style="left:911.50px;top:101.46px;width:1.30px;background:#abb2bf"></div><div class="mm" style="left:913.45px;top:101.46px;width:4.55px;background:#98c379"></div><div class="mm" style="left:918.65px;top:101.46px;width:7.80px;background:#98c379"></div><div class="mm" style="left:910.20px;top:102.82px;width:1.95px;background:#c678dd"></div><div class="mm" style="left:910.20px;top:105.54px;width:1.95px;background:#c678dd"></div><div class="mm" style="left:912.80px;top:105.54px;width:5.85px;background:#61afef"></div><div class="mm" style="left:918.65px;top:105.54px;width:0.65px;background:#abb2bf"></div><div class="mm" style="left:919.30px;top:105.54px;width:5.85px;background:#e06c75"></div><div class="mm" style="left:925.15px;top:105.54px;width:0.65px;background:#abb2bf"></div><div class="mm" style="left:911.50px;top:106.90px;width:3.90px;background:#abb2bf"></div><div class="mm" style="left:916.05px;top:106.90px;width:3.25px;background:#98c379"></div><div class="mm" style="left:919.95px;top:106.90px;width:0.65px;background:#abb2bf"></div><div class="mm" style="left:921.25px;top:106.90px;width:3.90px;background:#98c379"></div><div class="mm" style="left:925.80px;top:106.90px;width:11.05px;background:#abb2bf"></div><div class="mm" style="left:937.50px;top:106.90px;width:1.30px;background:#abb2bf"></div><div class="mm" style="left:939.45px;top:106.90px;width:4.55px;background:#98c379"></div><div class="mm" style="left:944.65px;top:106.90px;width:6.50px;background:#98c379"></div><div class="mm" style="left:910.20px;top:108.26px;width:1.95px;background:#c678dd"></div><div class="mm" style="left:908.90px;top:109.62px;width:1.95px;background:#c678dd"></div><div class="mm" style="left:907.60px;top:110.98px;width:1.95px;background:#c678dd"></div><div class="mm" style="left:906.30px;top:112.34px;width:1.95px;background:#c678dd"></div><div class="mm" style="left:905.00px;top:113.70px;width:1.95px;background:#c678dd"></div></div>

<!-- status bar -->
<div class="abs" style="left:238px;top:592.5px;width:762px;height:2px;background:#2d3139"></div>
<div class="abs" style="left:0;top:596.5px;width:1000px;height:28.5px;background:#20242a"></div>
<div class="abs" style="left:0;top:594.8px;width:1000px;height:2px;background:#1a1d22"></div>
<svg class="ic" style="left:7.3px;top:606px" width="11" height="10" viewBox="0 0 11 10"><rect x="0.6" y="0.6" width="9.4" height="8.4" rx="1" fill="none" stroke="#9a9ea6" stroke-width="1"/><path d="M2.6 2.6 L4.5 4.4 L2.6 6.2" fill="none" stroke="#9a9ea6" stroke-width="0.9"/><path d="M5 6.9 L7.8 6.9" stroke="#9a9ea6" stroke-width="0.9"/></svg>
<div class="sb" style="left:23.6px;font-size:8.82px">Git branch: feature/review-replies, index: 1?,</div><div class="sb" style="left:199px;font-size:8.53px">working: 1≠ 1× 1?, rubocop?, Line 1, Column 1</div>
<svg class="ic" style="left:793.5px;top:605.5px" width="7" height="11" viewBox="0 0 7 11"><circle cx="1.5" cy="1.5" r="1" fill="#9ea2aa"/><circle cx="1.5" cy="9.5" r="1" fill="#9ea2aa"/><circle cx="5.5" cy="2.5" r="1" fill="#9ea2aa"/><path d="M1.5 2 L1.5 9 M5.5 3 C5.5 6 1.5 5 1.5 8" stroke="#9ea2aa" stroke-width="0.9" fill="none"/></svg>
<div class="sb" style="left:803px;font-size:8.94px">feature/review-replies</div>
<div class="abs" style="left:891.5px;top:606.4px;width:10.2px;height:10px;border:1px solid #9ea2aa;border-radius:1.5px;font-size:8px;line-height:8.5px;text-align:center;color:#b0b4bb">5</div>
<div class="sb" style="left:918.6px;font-size:8.77px">Spaces: 2</div>
<div class="sb" style="left:975px;font-size:8.8px">Ruby</div>
</body></html>
